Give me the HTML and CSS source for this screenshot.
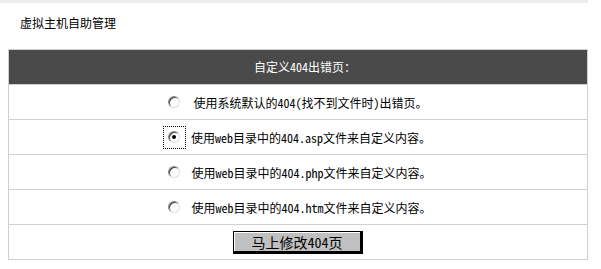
FILE: index.html
```html
<!DOCTYPE html>
<html lang="zh-CN">
<head>
    <meta charset="UTF-8">
    <title>虚拟主机自助管理</title>
    <link rel="stylesheet" href="styles.css">
</head>
<body>

<div class="topbar"></div>
<div class="title">虚拟主机自助管理</div>

<form class="panel">
    <div class="panel-head">自定义404出错页：</div>

    <div class="row">
        <label class="option wide">
            <span class="radio"></span>
            <span>使用系统默认的404(找不到文件时)出错页。</span>
        </label>
    </div>

    <div class="row">
        <label class="option">
            <span class="focus"><span class="radio checked"></span></span>
            <span>使用web目录中的404.asp文件来自定义内容。</span>
        </label>
    </div>

    <div class="row">
        <label class="option">
            <span class="radio"></span>
            <span>使用web目录中的404.php文件来自定义内容。</span>
        </label>
    </div>

    <div class="row">
        <label class="option">
            <span class="radio"></span>
            <span>使用web目录中的404.htm文件来自定义内容。</span>
        </label>
    </div>

    <div class="row">
        <button type="button" class="submit">马上修改404页</button>
    </div>
</form>

</body>
</html>
```

FILE: styles.css
```css
body {
    margin: 0;
    font-family: "Noto Sans Mono CJK SC", "Noto Sans CJK SC", sans-serif;
    font-size: 12px;
    color: #000;
    background-color: #fff;
}

.topbar {
    width: 588px;
    height: 3px;
    background-color: #ececec;
}

.title {
    padding: 12px 0 0 20px;
    line-height: 16px;
}

.panel {
    width: 578px;
    margin: 18px 0 0 8px;
    border: 1px solid #cfcfcf;
}

.panel-head {
    height: 34px;
    line-height: 34px;
    text-align: center;
    color: #fff;
    background-color: #4a4a4a;
    padding-left: 14px;
}

.row {
    height: 34px;
    border-top: 1px solid #d0d0d0;
    display: flex;
    justify-content: center;
    align-items: center;
}

.option {
    display: flex;
    align-items: center;
    gap: 11px;
    padding-left: 4px;
}

.option.wide {
    gap: 13px;
    padding-left: 0;
}

.radio {
    width: 10px;
    height: 10px;
    border-radius: 50%;
    border: 1px solid #888;
    border-right-color: #ddd;
    border-bottom-color: #ddd;
    box-shadow: inset 1px 1px 0 #404040;
    background-color: #fff;
    display: flex;
    justify-content: center;
    align-items: center;
}

.radio.checked::after {
    content: "";
    width: 4px;
    height: 4px;
    border-radius: 50%;
    background-color: #000;
}

.focus {
    display: flex;
    justify-content: center;
    align-items: center;
    width: 21px;
    height: 21px;
    border: 1px dotted #000;
    margin-left: -6px;
    margin-right: -6px;
}

.submit {
    width: 130px;
    height: 23px;
    padding: 0;
    font-family: inherit;
    font-size: 14px;
    color: #000;
    background-color: #c0c0c0;
    border: 1px solid #000;
    border-right-width: 3px;
    border-bottom-width: 3px;
    box-shadow: inset 1px 1px 0 #fff;
    cursor: pointer;
}
```
